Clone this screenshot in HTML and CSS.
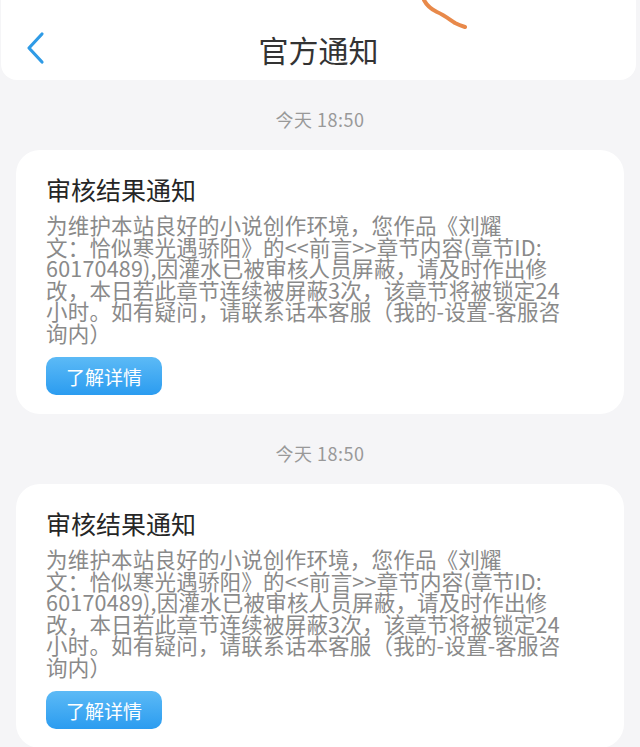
FILE: index.html
```html
<!DOCTYPE html>
<html lang="zh-CN">
<head>
    <meta charset="UTF-8">
    <meta name="viewport" content="width=device-width, initial-scale=1.0">
    <title>官方通知</title>
    <link rel="stylesheet" href="styles.css">
</head>
<body>

<header class="top-bar">
    <a class="back-btn" href="#">
        <svg width="20" height="34" viewBox="0 0 20 34">
            <polyline points="16,3 3,17 16,31" fill="none" stroke="#2f9be6" stroke-width="3.2" stroke-linecap="round" stroke-linejoin="round"/>
        </svg>
    </a>
    <h1 class="page-title">官方通知</h1>
    <svg class="scribble" width="60" height="32" viewBox="0 0 60 32">
        <path d="M4 0 C7 6 11 9 17 12 C24 15 29 19 35 23 C39 25 42 26 45 27" fill="none" stroke="#e8894a" stroke-width="4" stroke-linecap="round"/>
    </svg>
</header>

<main class="notice-list">
    <section class="notice">
        <div class="notice-time">今天 18:50</div>
        <div class="notice-card">
            <h2 class="notice-title">审核结果通知</h2>
            <p class="notice-text">为维护本站良好的小说创作环境，您作品《刘耀<br>文：恰似寒光遇骄阳》的&lt;&lt;前言&gt;&gt;章节内容(章节ID:<br>60170489),因灌水已被审核人员屏蔽，请及时作出修<br>改，本日若此章节连续被屏蔽3次，该章节将被锁定24<br>小时。如有疑问，请联系话本客服（我的-设置-客服咨<br>询内）</p>
            <button class="detail-btn">了解详情</button>
        </div>
    </section>

    <section class="notice">
        <div class="notice-time">今天 18:50</div>
        <div class="notice-card">
            <h2 class="notice-title">审核结果通知</h2>
            <p class="notice-text">为维护本站良好的小说创作环境，您作品《刘耀<br>文：恰似寒光遇骄阳》的&lt;&lt;前言&gt;&gt;章节内容(章节ID:<br>60170489),因灌水已被审核人员屏蔽，请及时作出修<br>改，本日若此章节连续被屏蔽3次，该章节将被锁定24<br>小时。如有疑问，请联系话本客服（我的-设置-客服咨<br>询内）</p>
            <button class="detail-btn">了解详情</button>
        </div>
    </section>
</main>

</body>
</html>
```

FILE: styles.css
```css
body {
    margin: 0;
    background-color: #f5f5f7;
    font-family: "Noto Sans CJK SC", "Noto Sans", sans-serif;
    overflow: hidden;
}
.top-bar {
    position: relative;
    height: 80px;
    margin: 0 4px 0 1px;
    background: #fff;
    border-radius: 0 0 16px 16px;
    display: flex;
    align-items: center;
    justify-content: center;
}
.back-btn {
    position: absolute;
    left: 25px;
    top: 31px;
    display: block;
    line-height: 0;
}
.page-title {
    margin: 0;
    font-size: 30px;
    font-weight: normal;
    color: #333;
    line-height: 40px;
    padding-top: 18px;
}
.scribble {
    position: absolute;
    left: 419px;
    top: 0;
}
.notice-time {
    padding: 28px 0 20px;
    text-align: center;
    font-size: 18px;
    letter-spacing: 0.5px;
    line-height: 22px;
    color: #999;
}
.notice-card {
    margin: 0 16px;
    padding: 24px 30px 19px;
    background: #fff;
    border-radius: 24px;
}
.notice-title {
    margin: 0 0 10px;
    font-size: 25px;
    font-weight: normal;
    line-height: 30px;
    color: #262626;
}
.notice-text {
    margin: 0;
    font-size: 21.5px;
    letter-spacing: 0.2px;
    line-height: 21.5px;
    color: #8a8a8a;
    white-space: nowrap;
}
.detail-btn {
    display: block;
    margin-top: 14px;
    width: 116px;
    height: 38px;
    border: none;
    border-radius: 10px;
    background: linear-gradient(#5cbaf6, #2b9cf0);
    color: #fff;
    font-family: inherit;
    font-size: 19px;
    cursor: pointer;
}
```
